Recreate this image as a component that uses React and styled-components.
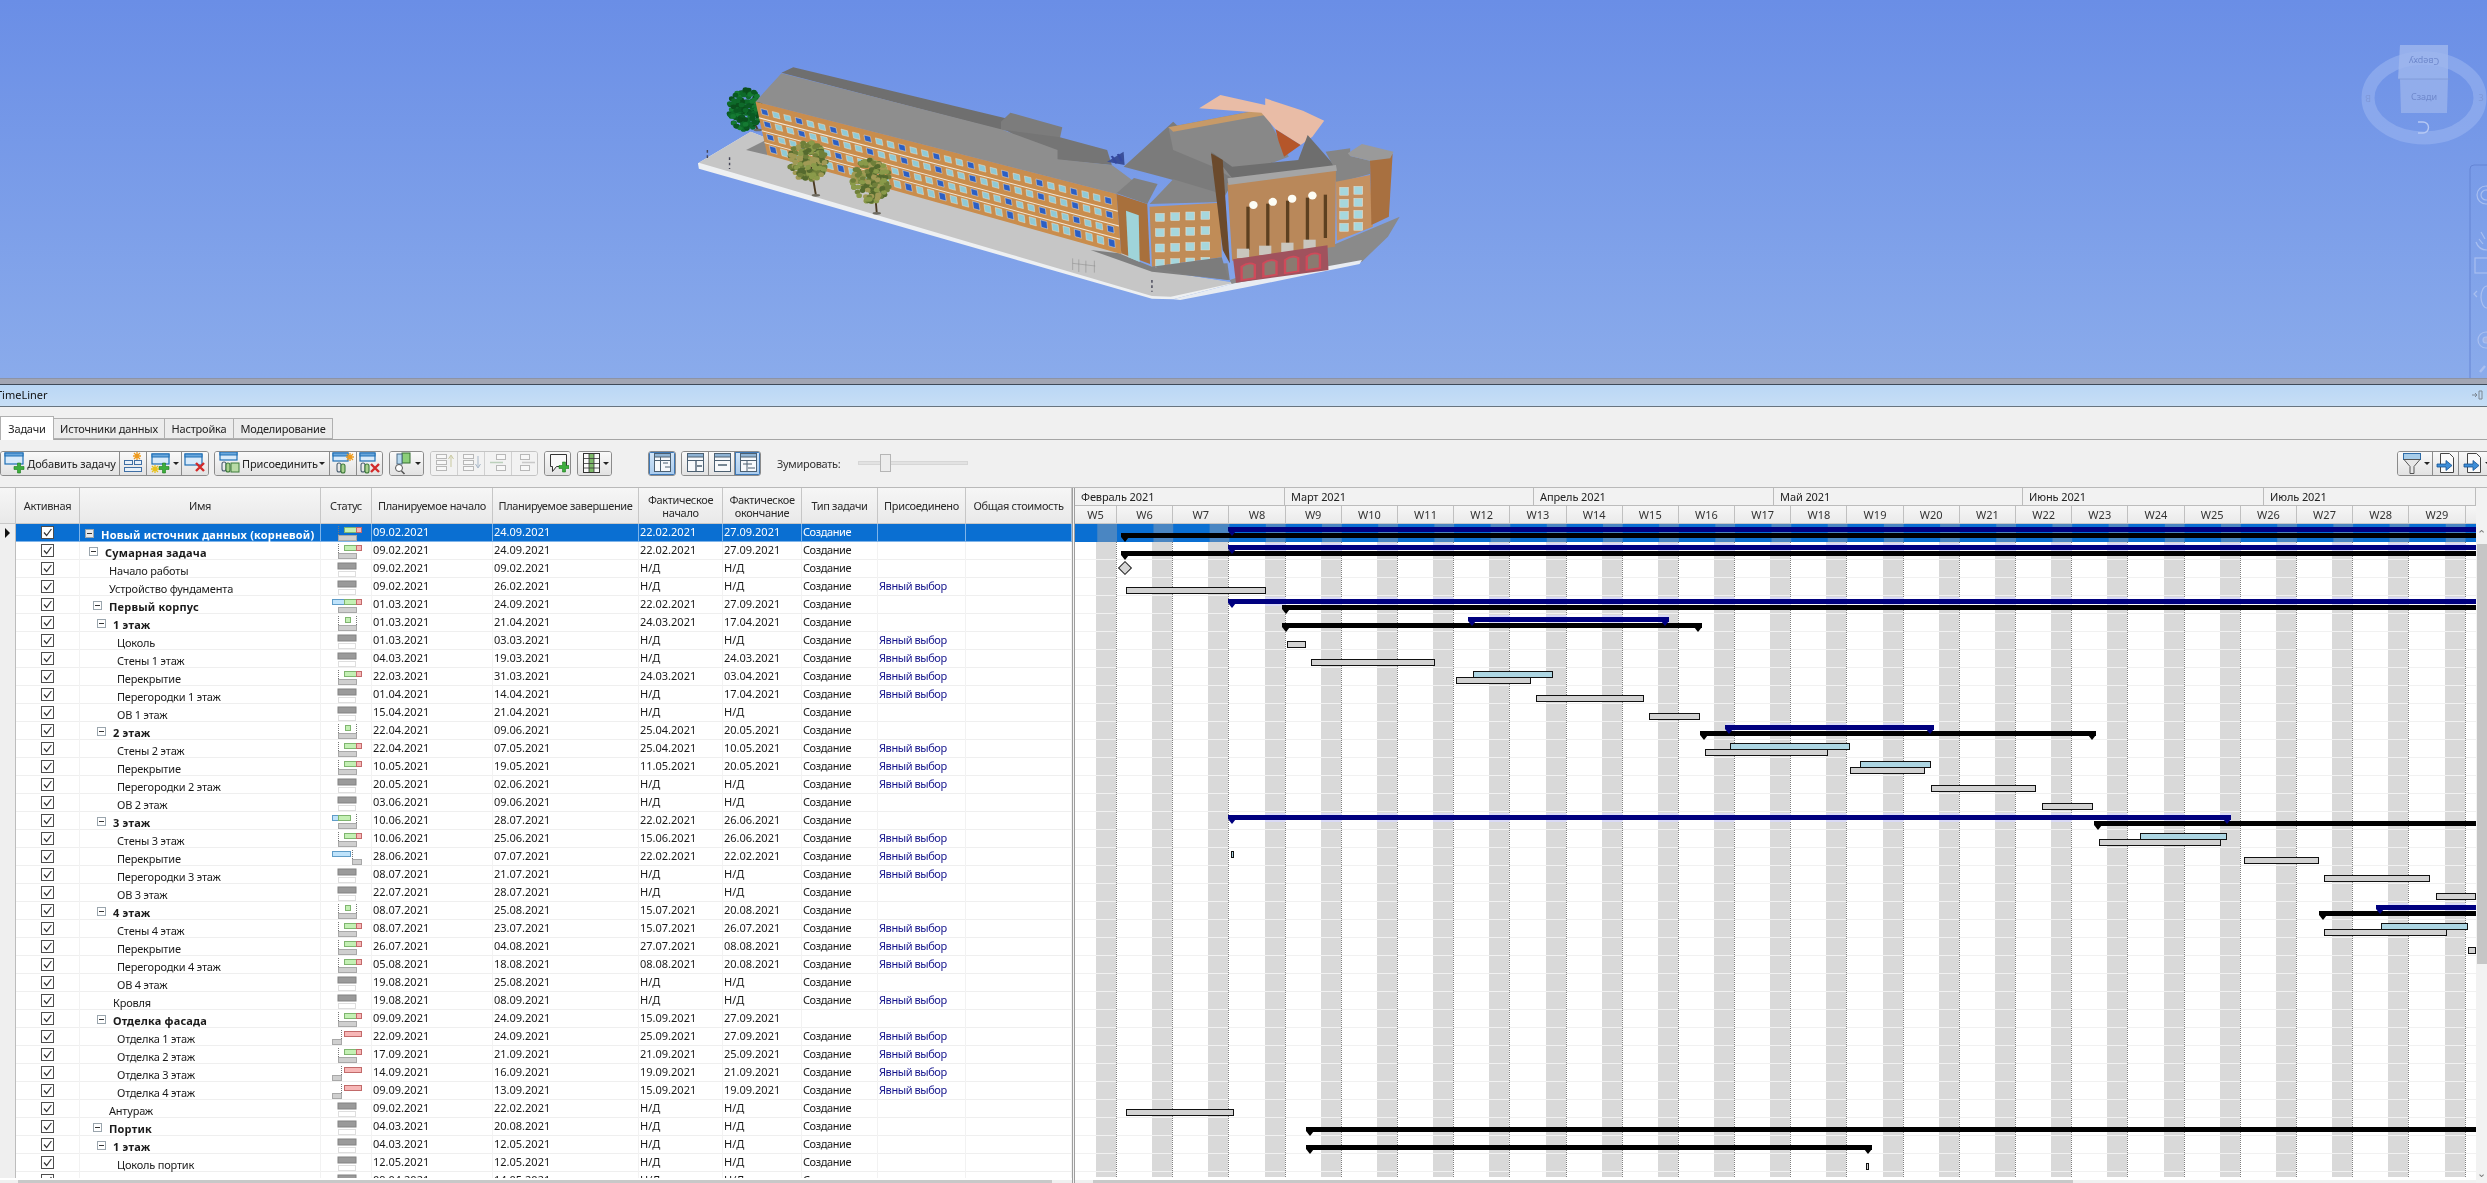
import React from 'react';
import styled, { createGlobalStyle, css } from 'styled-components';

const Global = createGlobalStyle`
  html, body { margin: 0; padding: 0; overflow: hidden; background: #f0f0f0; }
  * { box-sizing: border-box; }
  #root { font-family: "Noto Sans", "DejaVu Sans", sans-serif; font-size: 11px; color: #1a1a1a; }
`;

const Page = styled.div`
  width: 2487px; height: 1183px; overflow: hidden; display: flex; flex-direction: column;
`;

/* ---------- 3D viewport ---------- */
const Viewport = styled.div`
  position: relative; height: 378px; flex: none; overflow: hidden;
  background: linear-gradient(180deg, #6a8ee6 0%, #8aabeb 100%);
`;
const SceneSvg = styled.svg`position: absolute; left: 680px; top: 50px; width: 740px; height: 260px;`;
const CubeSvg = styled.svg`position: absolute; left: 2355px; top: 35px; width: 132px; height: 110px;`;
const NavSvg = styled.svg`position: absolute; left: 2468px; top: 164px; width: 19px; height: 214px;`;

const Splitter = styled.div`
  height: 7px; flex: none; background: #a2a6b3; border-top: 1px solid #8d93a5; border-bottom: 1px solid #3f4a58;
`;
const TitleBar = styled.div`
  height: 22px; flex: none; display: flex; align-items: center; justify-content: space-between; padding: 0 4px 2px 0;
  background: linear-gradient(180deg, #bad7f5, #c7def5); border-bottom: 1px solid #68747f; white-space: nowrap;
`;
const Title = styled.span`margin-left: -4px; font-size: 11px; color: #111;`;

const TabStrip = styled.div`
  height: 33px; flex: none; display: flex; align-items: flex-end; background: #f0f0f0; border-bottom: 1px solid #a5a5a5;
`;
const Tab = styled.div`
  height: ${p => p.$on ? 24 : 21}px; margin-bottom: ${p => p.$on ? -1 : 0}px; width: ${p => p.$w}px; display: flex; align-items: center; justify-content: center;
  border: 1px solid #b0b0b0; border-left-width: ${p => p.$on ? 1 : 0}px; border-bottom-width: ${p => p.$on ? 0 : 1}px;
  background: ${p => p.$on ? '#ffffff' : '#ececec'}; font-size: 11px; letter-spacing: -0.2px; color: #222; padding-bottom: 1px;
`;

/* ---------- toolbar ---------- */
const Toolbar = styled.div`
  height: 47px; flex: none; display: flex; align-items: center; background: #f0f0f0; padding-top: 0; overflow: hidden; padding-bottom: 1px;
`;
const BtnGroup = styled.div`
  display: flex; height: 25px; flex: none; margin-left: ${p => p.$ml || 0}px; border: 1px solid ${p => p.$off ? '#c4c4c4' : '#8b8b8b'}; border-radius: 3px; overflow: hidden;
  box-shadow: 0 1px 0 #fff inset;
`;
const Btn = styled.div`
  width: ${p => p.$w}px; height: 100%; display: flex; align-items: center; justify-content: center; gap: 1px; font-size: 11px; letter-spacing: -0.15px; color: #222;
  background: ${p => p.$active ? 'linear-gradient(180deg,#d3e6f8,#a9cbee)' : p.$off ? '#f2f2f2' : 'linear-gradient(180deg,#fafafa,#e2e2e2)'};
  border-right: 1px solid ${p => p.$off ? '#d0d0d0' : '#8b8b8b'};
  ${p => p.$active && css`box-shadow: inset 0 0 0 1px #3f78b5;`}
  &:last-child { border-right: 0; }
`;
const Caret = styled.i`
  width: 0; height: 0; border-left: 3px solid transparent; border-right: 3px solid transparent; border-top: 3px solid #222; flex: none;
`;
const ZoomLabel = styled.span`margin-left: 16px; font-size: 11px; letter-spacing: -0.3px; color: #333; white-space: nowrap; width: 65px;`;
const ZoomTrack = styled.div`
  position: relative; margin-left: 16px; width: 110px; height: 4px; background: #e2e2e2; border: 1px solid #d6d6d6;
`;
const ZoomThumb = styled.div`
  position: absolute; left: 21px; top: -8px; width: 11px; height: 18px; background: #ececec; border: 1px solid #b5b5b5;
`;
const Spring = styled.div`flex: 1;`;
const RightTools = styled.div`margin-right: -8px; display: flex; flex: none;`;

/* ---------- table ---------- */
const Panes = styled.div`
  flex: 1; min-height: 0; display: flex; border-top: 1px solid #b9b9b9; background: #fff; overflow: hidden;
`;
const Cols = '16px 64px 241px 51px 121px 146px 84px 79px 76px 88px 106px';
const TablePane = styled.div`width: 1072px; flex: none; display: flex; flex-direction: column; overflow: hidden;`;
const HeaderRow = styled.div`
  height: 36px; flex: none; display: grid; grid-template-columns: ${Cols};
  background: linear-gradient(180deg,#f6f6f6,#e9e9e9); border-bottom: 1px solid #c8c8c8;
`;
const HeaderCell = styled.div`
  display: flex; align-items: center; justify-content: center; text-align: center; line-height: 13px; font-size: 11px; letter-spacing: -0.35px; color: #2a2a2a;
  border-right: 1px solid #c6c6c6; white-space: pre-line;
`;
const Body = styled.div`height: 654px; flex: none; overflow: hidden; background: #fff;`;
const RowLine = styled.div`
  height: 18px; display: grid; grid-template-columns: ${Cols}; border-bottom: 1px solid #efefef;
  ${p => p.$sel && css`background: #0a6fd2; color: #fff; border-bottom-color: #7fb4e9;`}
`;
const Gutter = styled.div`
  background: #efefef; border-right: 1px solid #bdbdbd; border-bottom: 1px solid #c9c9c9; margin-bottom: -1px; display: flex; align-items: center; justify-content: center;
`;
const RowArrow = styled.i`
  width: 0; height: 0; border-top: 5px solid transparent; border-bottom: 5px solid transparent; border-left: 5px solid #111;
`;
const CheckCell = styled.div`
  display: flex; align-items: center; justify-content: center; border-right: 1px solid ${p => p.$sel ? '#7fb4e9' : '#f2f2f2'};
`;
const CheckBox = styled.div`
  width: 13px; height: 13px; background: #fff; border: 1px solid #4d4d4d; display: flex; align-items: center; justify-content: center; margin-top: -1px;
`;
const NameCell = styled.div`
  display: flex; align-items: center; padding-left: ${p => p.$pad}px; padding-top: 2px; white-space: nowrap; overflow: hidden;
  font-weight: ${p => p.$bold ? 700 : 400}; letter-spacing: ${p => p.$bold ? '0.2px' : '-0.2px'}; border-right: 1px solid ${p => p.$sel ? '#7fb4e9' : '#f2f2f2'}; font-size: 11px;
`;
const Expander = styled.span`
  width: 9px; height: 9px; flex: none; margin-right: 7px; position: relative; top: -1px;
  background: ${p => p.$sel ? '#e8e8e8' : '#fff'}; border: 1px solid #9aa5ad;
  &::after { content: ''; position: absolute; left: 1px; right: 1px; top: 3px; height: 1px; background: #333; }
`;
const StatusCell = styled.div`
  padding-left: 11px; display: flex; align-items: center; border-right: 1px solid ${p => p.$sel ? '#7fb4e9' : '#f2f2f2'};
`;
const TextCell = styled.div`
  padding: 0 0 3px 1px; display: flex; align-items: center; white-space: nowrap; overflow: hidden; font-size: 11px;
  letter-spacing: ${p => p.$tight ? '-0.42px' : '0'};
  color: ${p => p.$link ? '#14148c' : 'inherit'}; border-right: 1px solid ${p => p.$sel ? '#7fb4e9' : '#f2f2f2'};
`;
const HScrollRow = styled.div`
  margin-top: 2px; height: 4px; flex: none; background: #f0f0f0; display: flex; padding-left: ${p => p.$l}px; padding-right: ${p => p.$r}px;
`;
const HThumb = styled.div`flex: 1; background: #c8c8c8;`;

/* ---------- gantt ---------- */
const PaneGap = styled.div`
  width: 3px; flex: none; background: #f4f4f4; border-left: 1px solid #9e9e9e; border-right: 1px solid #9e9e9e;
`;
const GanttPane = styled.div`width: 1401px; flex: none; display: flex; flex-direction: column; overflow: hidden;`;
const MonthRow = styled.div`
  height: 18px; flex: none; display: flex; background: #f2f2f2; border-bottom: 1px solid #bcbcbc;
`;
const Month = styled.div`
  width: ${p => p.$w}px; flex: none; padding-left: 6px; display: flex; align-items: center; border-right: 1px solid #bcbcbc; font-size: 11px; letter-spacing: -0.1px; color: #222; white-space: nowrap;
`;
const weekCols = `42px repeat(24, 56.2px) 1fr`;
const WeekRow = styled.div`
  height: 18px; flex: none; display: grid; grid-template-columns: ${weekCols}; background: linear-gradient(180deg,#f6f6f6,#eaeaea); border-bottom: 1px solid #c8c8c8;
`;
const Week = styled.div`
  display: flex; align-items: center; justify-content: center; border-right: 1px solid #c0c0c0; font-size: 11px; color: #333;
`;
const GanttBody = styled.div`
  position: relative; height: 654px; flex: none; overflow: hidden; background: #fff;
`;
const StripeLayer = styled.div`
  position: absolute; inset: 0 0 1px 0; display: grid; grid-template-columns: ${weekCols};
`;
const StripeCol = styled.div`
  background: linear-gradient(#d9d9d9,#d9d9d9) right top / 20px 100% no-repeat;
  border-right: 1px dotted #7f7f7f;
`;
const StripeEnd = styled.div``;
const GanttRows = styled.div`position: relative;`;
const GanttRow = styled.div`
  position: relative; height: 18px; border-bottom: 1px solid #f1f1f1;
  ${p => p.$sel && css`
    border-bottom: 0;
    background: linear-gradient(90deg, #0a6fd2 0 36.2px, #4a86c2 36.2px) 42px 0 / 56.2px 100% repeat-x;
  `}
`;
const barKinds = {
  navy: css`top: 3px; height: 5px; background: #00007f;`,
  black: css`top: 9px; height: 5px; background: #000;`,
  plan: css`top: 9px; height: 7px; background: #d2d2d2; border: 1px solid #111;`,
  real: css`top: 3px; height: 7px; background: #add6e3; border: 1px solid #111;`,
};
const Bar = styled.div`
  position: absolute; z-index: ${p => p.$kind === 'plan' ? 2 : 1}; ${p => barKinds[p.$kind]};
`;
const Halo = styled.div`
  position: absolute; top: 1px; height: 9px; background: #cfcff6; mix-blend-mode: lighten;
`;
const Marker = styled.div`
  position: absolute; z-index: 3; width: 8px; height: 9px; clip-path: polygon(0 0, 100% 0, 100% 45%, 50% 100%, 0 45%);
  top: ${p => p.$kind === 'navy' ? 3 : 9}px; background: ${p => p.$kind === 'navy' ? '#00007f' : '#000'};
`;
const DiamondMark = styled.div`
  position: absolute; z-index: 3; width: 10px; height: 10px; top: 3px; background: #d6d6d6; border: 1px solid #222; transform: rotate(45deg);
`;

const VScroll = styled.div`
  width: 11px; flex: none; display: flex; flex-direction: column; background: #f2f2f2; margin-left: 0;
`;
const VArrow = styled.div`
  flex: none; height: ${p => p.$h}px; display: flex; align-items: ${p => p.$end ? 'flex-start' : 'flex-end'}; justify-content: center; padding-bottom: 3px; color: #777;
`;
const VThumb = styled.div`height: 420px; flex: none; margin-left: 1px; background: #c6c6c6;`;
const VFill = styled.div`flex: 1; min-height: 0;`;

/* ---------- drawings ---------- */
const LinkIcon = ({ x = 2, y = 10 }) => (
  <g fill="none" stroke="#4b5f70" strokeWidth="1.1">
    <rect x={x} y={y} width="4" height="9" rx="2" /><rect x={x + 4} y={y + 1} width="4" height="9" rx="2" fill="#a9d08e" stroke="#3d7a3a" />
  </g>
);
const TaskBox = ({ x = 1, y = 2, w = 16, h = 10 }) => (
  <g>
    <rect x={x} y={y} width={w} height={h} fill="#d8eafa" stroke="#1f6fb5" strokeWidth="1.2" />
    <rect x={x} y={y} width={w} height="3" fill="#6aa7dc" stroke="#1f6fb5" strokeWidth="1" />
  </g>
);
const Plus = ({ x = 14, y = 15 }) => (
  <path d={`M${x - 1.5} ${y - 5}h3v3.5h3.5v3h-3.5v3.5h-3v-3.5h-3.5v-3h3.5z`} fill="#3cae3c" stroke="#1c7a1c" strokeWidth=".6" />
);
const Cross = ({ x = 15, y = 15 }) => (
  <path d={`M${x - 4} ${y - 4}l8 8M${x + 4} ${y - 4}l-8 8`} stroke="#d22a2a" strokeWidth="2.4" />
);
const Star = ({ x = 17, y = 6, c = '#ee9a1d' }) => (
  <path d={`M${x} ${y - 4}v8M${x - 4} ${y}h8M${x - 3} ${y - 3}l6 6M${x + 3} ${y - 3}l-6 6`} stroke={c} strokeWidth="1.3" />
);
const GridIcon = ({ mode }) => (
  <g fill="none" stroke="#4c6072" strokeWidth="1">
    <rect x="3.5" y="2.5" width="16" height="18" fill="#f7f9fb" />
    <rect x="3.5" y="2.5" width="16" height="3.5" fill="#8fb3d4" />
    <path d="M3.5 9.5h16" />
    {mode === 'split' && <path d="M9.5 6v14.5M12 12h5M14 16h5" />}
    {mode === 'left' && <path d="M12 9.5v11M13 15h5" strokeWidth="1.4" />}
    {mode === 'mid' && <path d="M7 14h9" strokeWidth="1.4" />}
    {mode === 'right' && <path d="M10 9.5v11M6 13h9M11 17h7" />}
  </g>
);
const Icon = ({ kind }) => {
  const gray = '#b8b8b8';
  const map = {
    add: <><TaskBox x={1} y={2} w={18} h={11} /><Plus x={15} y={17} /></>,
    insert: <><g stroke="#3f6fa5" fill="#e8f1fa"><rect x="2.5" y="9.5" width="8" height="4" /><rect x="2.5" y="16.5" width="17" height="4" /><rect x="12.5" y="9.5" width="7" height="4" /></g><Star x={15} y={5} /></>,
    addStar: <><TaskBox x={2} y={3} w={17} h={10} /><Plus x={14} y={17} /><Star x={5} y={18} c="#e8c21d" /></>,
    del: <><TaskBox x={1} y={3} w={17} h={11} /><Cross x={16} y={16} /></>,
    attach: <><TaskBox x={1} y={1} w={17} h={8} /><LinkIcon x={3} y={11} /><rect x="12" y="12" width="8" height="9" fill="#b9dba6" stroke="#3d7a3a" /></>,
    attachStar: <><TaskBox x={1} y={2} w={15} h={8} /><LinkIcon x={5} y={12} /><Star x={18} y={6} /></>,
    attachX: <><TaskBox x={1} y={2} w={15} h={8} /><LinkIcon x={2} y={12} /><Cross x={16} y={17} /></>,
    find: <><rect x="10" y="2" width="8" height="10" fill="#8ccf7a" stroke="#356f30" /><rect x="5" y="3" width="5" height="10" fill="#b7d9f0" stroke="#4d6b85" /><circle cx="7" cy="17" r="3.5" fill="#fff" stroke="#555" /><path d="M9.5 20l3 3" stroke="#555" strokeWidth="1.6" /></>,
    up: <><g stroke={gray} fill="#f8f8f8"><rect x="3.5" y="3.5" width="10" height="4" /><rect x="3.5" y="9.5" width="10" height="4" /><rect x="3.5" y="15.5" width="10" height="4" /></g><path d="M18 16V5M15.5 8L18 4l2.5 4" stroke="#c9c9a0" fill="none" /></>,
    down: <><g stroke={gray} fill="#f8f8f8"><rect x="3.5" y="3.5" width="10" height="4" /><rect x="3.5" y="9.5" width="10" height="4" /><rect x="3.5" y="15.5" width="10" height="4" /></g><path d="M18 5v11M15.5 13l2.5 4 2.5-4" stroke="#a9b8c9" fill="none" /></>,
    indent: <><g stroke={gray} fill="#f8f8f8"><rect x="9.5" y="3.5" width="9" height="5" /><rect x="9.5" y="14.5" width="9" height="5" /></g><path d="M3 11.5h13" stroke="#bcd0bc" strokeWidth="1.5" /></>,
    outdent: <><g stroke={gray} fill="#f8f8f8"><rect x="6.5" y="3.5" width="9" height="5" /><rect x="6.5" y="14.5" width="9" height="5" /></g><path d="M8 11.5h13" stroke="#c8c8c8" strokeWidth="1.5" /></>,
    comment: <><path d="M3.5 3.5h16v12h-10l-4 5v-5h-2z" fill="#fafafa" stroke="#333" /><Plus x={17} y={16} /></>,
    columns: <><rect x="3.5" y="2.5" width="16" height="19" fill="#fafafa" stroke="#333" /><rect x="9" y="3" width="5" height="18" fill="#7cb868" /><path d="M3.5 7.5h16M3.5 12.5h16M3.5 17h16M9 3v18M14 3v18" stroke="#333" strokeWidth=".8" /></>,
    filter: <><rect x="2.5" y="2.5" width="17" height="6" fill="#a7cdea" stroke="#2e6ca8" /><path d="M3 8.5h16l-6 7v7h-4v-7z" fill="#e7e7e7" stroke="#555" /></>,
    doc: <><path d="M5.5 2.5h9l4 4v15h-13z" fill="#fafafa" stroke="#444" /><path d="M2 13h9V9.5l6 5-6 5V16H2z" fill="#3e8ed8" stroke="#14518f" strokeWidth=".8" /></>,
  };
  return <svg width="22" height="24" viewBox="0 0 22 24">{map[kind]}</svg>;
};

const CheckMark = () => (
  <svg width="11" height="11" viewBox="0 0 11 11"><path d="M2 5.5l2.6 3L9.4 2" fill="none" stroke="#333" strokeWidth="1.2" /></svg>
);

const Dash = ({ x }) => <path d={`M${x + 0.5} 2V17`} stroke="#777" strokeDasharray="1 1" />;
const PlanBar = ({ x = 6, w = 18, y = 11 }) => <rect x={x + .5} y={y + .5} width={w} height="5" fill="#cfcfcf" stroke="#a8a8a8" />;
const SG = '#c4f0b4', SR = '#f7b7b7', SB = '#bfe3fb';
const Seg = ({ x, w, c, s, y = 3 }) => <rect x={x + .5} y={y + .5} width={w} height="5" fill={c} stroke={s} />;
const StatusIcon = ({ k }) => (
  <svg width="30" height="18" viewBox="0 0 30 18">
    {k === 'N' && <><rect x="6" y="3" width="18" height="6" fill="#9a9a9a" stroke="#828282" /><rect x="6.5" y="11.5" width="17" height="5" fill="#fff" stroke="#dedede" /></>}
    {k === 'GR' && <><Dash x={6} /><Seg x={12} w={12} c={SG} s="#7fb56f" /><Seg x={24} w={5} c={SR} s="#c26a6a" /><PlanBar /></>}
    {k === 'G' && <><Dash x={6} /><Dash x={24} /><Seg x={13} w={5} c={SG} s="#7fb56f" /><PlanBar /></>}
    {k === 'BGR' && <><Seg x={0} w={12} c={SB} s="#5f9cc7" /><Seg x={12} w={12} c={SG} s="#7fb56f" /><Seg x={24} w={5} c={SR} s="#c26a6a" /><PlanBar /></>}
    {k === 'BG' && <><Dash x={24} /><Seg x={0} w={6} c={SB} s="#5f9cc7" /><Seg x={6} w={12} c={SG} s="#7fb56f" /><PlanBar /></>}
    {k === 'B' && <><Dash x={20} /><Seg x={0} w={18} c={SB} s="#5f9cc7" /><PlanBar x={20} w={9} /></>}
    {k === 'R' && <><Dash x={9} /><Seg x={12} w={17} c={SR} s="#c26a6a" /><PlanBar x={0} w={9} /></>}
  </svg>
);

/* building */
const poly = (pts, fill, extra = {}) => <polygon points={pts} fill={fill} {...extra} />;
const lerp = (a, b, t) => a + (b - a) * t;
const faceP = (u, v) => {
  const tx = lerp(160, 925, u), ty = lerp(160, 435, u), bx = lerp(185, 935, u), by = lerp(315, 610, u);
  return [lerp(tx, bx, v), lerp(ty, by, v)];
};
const FacadeWindows = () => {
  const out = [];
  const rows = [0.08, 0.32, 0.57, 0.8];
  for (let r = 0; r < 4; r++) {
    for (let c = 0; c < 31; c++) {
      const u = 0.012 + c * 0.0318, du = 0.018, dv = r === 3 ? 0.13 : 0.11, v = rows[r];
      const pts = [faceP(u, v), faceP(u + du, v), faceP(u + du, v + dv), faceP(u, v + dv)].map(p => p.join(',')).join(' ');
      const dark = (c * 7 + r * 3) % 3 === 0;
      out.push(<polygon key={r + '-' + c} points={pts} fill={dark ? '#2c5fc4' : '#8fcad6'} stroke="#e8e4d8" strokeWidth="1.2" />);
    }
  }
  return <g>{out}</g>;
};
const Band = ({ v }) => {
  const a = faceP(0, v), b = faceP(1, v);
  return <line x1={a[0]} y1={a[1]} x2={b[0]} y2={b[1]} stroke="#f2e8d8" strokeWidth="3" />;
};
const Tree = ({ cx, cy, rx, ry, tx, ty, colors, seed }) => {
  const dots = [];
  let s = seed;
  const rnd = () => { s = (s * 9301 + 49297) % 233280; return s / 233280; };
  for (let i = 0; i < 170; i++) {
    const a = rnd() * 6.283, q = Math.sqrt(rnd());
    dots.push(<ellipse key={i} cx={cx + Math.cos(a) * q * rx} cy={cy + Math.sin(a) * q * ry} rx="6" ry="7" fill={colors[i % colors.length]} />);
  }
  return <g><line x1={cx + 6} y1={cy} x2={tx} y2={ty} stroke="#4a3a22" strokeWidth="4" />{dots}<ellipse cx={tx} cy={ty} rx="9" ry="4" fill="#6d6a60" /></g>;
};
const WinGrid = ({ x0, y0, nx, ny, dx, dy, sx, sy }) => {
  const o = [];
  for (let j = 0; j < ny; j++) for (let i = 0; i < nx; i++) {
    o.push(<rect key={i + '_' + j} x={x0 + i * dx} y={y0 + j * dy + i * sy} width={sx} height="24" fill="#a6d7dd" stroke="#e4e0d4" strokeWidth="1.4" />);
  }
  return <g>{o}</g>;
};
const Scene = () => (
  <SceneSvg viewBox="0 0 1568 780" preserveAspectRatio="none">
    {poly('38,340 150,245 300,330 930,600 1000,660 1175,700 1045,748 1000,746 40,356', '#eef0f2')}
    {poly('40,338 150,245 300,330 930,600 1000,660 1175,698 1040,740 1000,738', '#c6c6c6')}
    {poly('1375,590 1525,500 1500,560 1445,635 1170,705 1165,690', '#8a8a8a')}
    {poly('1445,630 1175,700 1045,748 1060,750 1200,712 1440,642', '#e8ecf2')}
    {poly('870,600 930,610 1000,650 1160,640 1165,690 1000,665', '#7f7f7f')}
    {poly('140,300 182,270 185,315', '#888888')}
    <Tree cx={138} cy={178} rx={34} ry={62} tx={165} ty={240} colors={['#0e6a2a', '#0a5a22', '#157a32', '#0a4f1c']} seed={7} />
    {poly('215,68 240,52 690,205 680,240', '#6f6f6f')}
    {poly('680,215 700,188 810,232 805,265 680,240', '#7c7c7c')}
    {poly('690,240 805,262 905,300 915,345 800,330', '#757575')}
    {poly('160,155 215,70 680,238 800,300 800,328 915,345 960,392 925,432', '#8e8e8e')}
    {poly('160,155 925,432 935,612 185,315', '#c98d4d')}
    <Band v={0.28} /><Band v={0.53} /><Band v={0.76} />
    <FacadeWindows />
    {poly('905,335 940,305 942,345', '#3a4f9a')}
    {poly('940,350 1045,215 1175,385 1150,450 1045,390 1020,380', '#7b7b7b')}
    {poly('925,432 990,462 996,642 935,610', '#a8703c')}
    {poly('945,482 972,496 974,636 950,622', '#9fd4da')}
    {poly('925,430 962,384 1012,402 990,462', '#808080')}
    {poly('995,462 1045,388 1140,428 1145,456', '#858585')}
    {poly('995,470 1145,458 1148,622 1000,650', '#c08c57')}
    <WinGrid x0={1008} y0={490} nx={4} ny={4} dx={32} dy={46} sx={18} sy={-2} />
    {poly('1000,650 1148,622 1162,690 1060,670', '#7c7c7c')}
    {poly('1035,232 1235,178 1290,320 1170,385 1130,350 1045,300', '#888888')}
    {poly('1035,232 1235,178 1240,195 1045,245', '#c79a68')}
    {poly('1100,175 1145,135 1240,165 1240,145 1320,182 1365,212 1340,260 1315,285 1262,238 1232,188', '#e9bca6')}
    {poly('1262,238 1315,285 1280,320 1268,272', '#b5562a')}
    {poly('1125,305 1170,385 1390,352 1330,255 1310,330 1170,350', '#6e6e6e')}
    {poly('1125,310 1150,330 1165,640 1150,600', '#6b4a2c')}
    {poly('1368,305 1420,295 1420,318 1462,332 1462,372 1390,400 1385,350', '#858585')}
    {poly('1390,395 1462,375 1468,530 1392,572', '#c49060')}
    <WinGrid x0={1398} y0={412} nx={2} ny={4} dx={30} dy={36} sx={18} sy={-3} />
    {poly('1462,330 1510,312 1502,500 1465,525', '#a87040')}
    {poly('1415,310 1445,282 1512,305 1505,325 1462,332 1420,318', '#9a9a9a')}
    {poly('1160,400 1390,350 1388,590 1170,632', '#b9885a')}
    {poly('1160,385 1390,345 1392,362 1162,405', '#a5a5a5')}
    {[1200, 1242, 1284, 1326, 1364].map((x, i) => <rect key={x} x={x} y={470 - i * 9} width="7" height="130" fill="#5d4020" />)}
    {[1215, 1256, 1297, 1340].map((x, i) => <ellipse key={x} cx={x} cy={465 - i * 9.5} rx="9" ry="12" fill="#fdfdf5" />)}
    {[0, 1, 2, 3].map(i => <rect key={i} x={1180 + i * 47} y={596 - i * 9} width="26" height="28" fill="#c9c6be" />)}
    {poly('1172,628 1372,586 1374,660 1178,698', '#a0525d')}
    {[0, 1, 2, 3].map(i => <path key={i} d={`M${1190 + i * 46} ${690 - i * 10}v-40q14 -16 28 -6v40z`} fill="#8a7a70" stroke="#cf4a5a" strokeWidth="5" />)}
    <Tree cx={270} cy={335} rx={40} ry={58} tx={288} ty={436} colors={['#6f7f3a', '#8a9a4a', '#556a2e', '#a09a55']} seed={31} />
    <Tree cx={405} cy={392} rx={40} ry={64} tx={417} ty={490} colors={['#6f7f3a', '#8a9a4a', '#556a2e', '#a09a55']} seed={77} />
    <path d="M832 625v35M845 628v38M860 632v36M878 632v36M832 640l48 8" stroke="#777" fill="none" />
    <path d="M105 322v35M58 300v30M1000 690v35" stroke="#445" strokeWidth="3" strokeDasharray="8 8" />
    <path d="M915 318l10 22M928 312l8 22" stroke="#3448a0" strokeWidth="5" />
  </SceneSvg>
);
const CubeWidget = () => (
  <CubeSvg viewBox="0 0 132 110">
    <ellipse cx="69" cy="63" rx="56" ry="40" fill="none" stroke="#9ab4f0" strokeOpacity=".6" strokeWidth="13" />
    <polygon points="45,10 93,10 93,44 43,44" fill="#a0b8ee" fillOpacity=".8" />
    <polygon points="45,44 93,44 92,78 46,78" fill="#94aeeb" fillOpacity=".95" />
    <line x1="43" y1="44" x2="95" y2="44" stroke="#7d97d6" strokeWidth=".8" />
    <text x="69" y="65" textAnchor="middle" fontSize="9" fill="#6f89cc" fontFamily="Noto Sans">Сзади</text>
    <text x="0" y="0" textAnchor="middle" fontSize="9" fill="#6f89cc" fontFamily="Noto Sans" transform="translate(69 23) rotate(180)">Сверху</text>
    <text x="13" y="66" textAnchor="middle" fontSize="9" fill="#7f98d8" fontFamily="Noto Sans" transform="rotate(180 13 63)">В</text>
    <text x="126" y="66" textAnchor="middle" fontSize="9" fill="#7f98d8" fontFamily="Noto Sans">З</text>
    <path d="M63 98h5a5 5 0 0 0 0-11h-5" fill="none" stroke="#b7c9f4" strokeWidth="1.4" />
  </CubeSvg>
);
const NavBar = () => (
  <NavSvg viewBox="0 0 19 214" fill="none">
    <path d="M19 1H6a4 4 0 0 0-4 4v209" stroke="#6484d4" strokeWidth="1" />
    <g stroke="#a9bff0" strokeWidth="1.2">
      <circle cx="18" cy="31" r="9" /><circle cx="18" cy="31" r="5" />
      <path d="M8 78c2 6 6 8 11 8M11 75l4 5M13 68l4 7" />
      <rect x="7" y="94" width="14" height="15" />
      <ellipse cx="19" cy="133" rx="6" ry="11" /><path d="M9 127l-3 3 3 3" />
      <circle cx="18" cy="176" r="8" /><circle cx="18" cy="176" r="3" fill="#9fb2e4" />
      <path d="M12 208l5-6" strokeWidth="2.5" />
    </g>
  </NavSvg>
);

/* ---------- data ---------- */
const Я = 'Явный выбор', НД = 'Н/Д';
const y = (d) => d.length === 5 ? d + '.2021' : d;
const T = (name, lvl, kind, status, a, b, c, d, link, extra = {}) => ({ name, lvl, parent: kind === 'p', status, cells: [y(a), y(b), c === 0 ? НД : y(c), d === 0 ? НД : y(d)], link, ...extra });
const END = 2476;
const g = (from, to) => ({ k: 'plan', from, to });
const r = (from, to) => ({ k: 'real', from, to });
const n = (from, to) => ({ k: 'navy', from, to });
const b = (from, to) => ({ k: 'black', from, to });

const rows = [
  { ...T('Новый источник данных (корневой)', 0, 'p', 'GR', '09.02', '24.09', '22.02', '27.09', ''), bars: [n(1229, END), b(1122, END)] },
  { ...T('Сумарная задача', 1, 'p', 'GR', '09.02', '24.09', '22.02', '27.09', ''), bars: [n(1229, END), b(1122, END)] },
  { ...T('Начало работы', 2, 'l', 'N', '09.02', '09.02', 0, 0, ''), diamond: 1125 },
  { ...T('Устройство фундамента', 2, 'l', 'N', '09.02', '26.02', 0, 0, Я), bars: [g(1126, 1266)] },
  { ...T('Первый корпус', 2, 'p', 'BGR', '01.03', '24.09', '22.02', '27.09', ''), bars: [n(1229, END), b(1283, END)] },
  { ...T('1 этаж', 3, 'p', 'G', '01.03', '21.04', '24.03', '17.04', ''), bars: [n(1469, 1669), b(1283, 1702)] },
  { ...T('Цоколь', 4, 'l', 'N', '01.03', '03.03', 0, 0, Я), bars: [g(1287, 1306)] },
  { ...T('Стены 1 этаж', 4, 'l', 'N', '04.03', '19.03', 0, '24.03', Я), bars: [g(1311, 1435)] },
  { ...T('Перекрытие', 4, 'l', 'GR', '22.03', '31.03', '24.03', '03.04', Я), bars: [r(1473, 1553), g(1456, 1531)] },
  { ...T('Перегородки 1 этаж', 4, 'l', 'N', '01.04', '14.04', 0, '17.04', Я), bars: [g(1536, 1644)] },
  { ...T('ОВ 1 этаж', 4, 'l', 'N', '15.04', '21.04', 0, 0, ''), bars: [g(1649, 1700)] },
  { ...T('2 этаж', 3, 'p', 'G', '22.04', '09.06', '25.04', '20.05', ''), bars: [n(1726, 1934), b(1701, 2096)] },
  { ...T('Стены 2 этаж', 4, 'l', 'GR', '22.04', '07.05', '25.04', '10.05', Я), bars: [r(1730, 1850), g(1705, 1828)] },
  { ...T('Перекрытие', 4, 'l', 'GR', '10.05', '19.05', '11.05', '20.05', Я), bars: [r(1860, 1931), g(1850, 1925)] },
  { ...T('Перегородки 2 этаж', 4, 'l', 'N', '20.05', '02.06', 0, 0, Я), bars: [g(1931, 2036)] },
  { ...T('ОВ 2 этаж', 4, 'l', 'N', '03.06', '09.06', 0, 0, ''), bars: [g(2042, 2093)] },
  { ...T('3 этаж', 3, 'p', 'BG', '10.06', '28.07', '22.02', '26.06', ''), bars: [n(1229, 2231), b(2095, END)] },
  { ...T('Стены 3 этаж', 4, 'l', 'GR', '10.06', '25.06', '15.06', '26.06', Я), bars: [r(2140, 2227), g(2099, 2221)] },
  { ...T('Перекрытие', 4, 'l', 'B', '28.06', '07.07', '22.02', '22.02', Я), bars: [r(1231, 1234), g(2244, 2319)] },
  { ...T('Перегородки 3 этаж', 4, 'l', 'N', '08.07', '21.07', 0, 0, Я), bars: [g(2324, 2430)] },
  { ...T('ОВ 3 этаж', 4, 'l', 'N', '22.07', '28.07', 0, 0, ''), bars: [g(2436, END)] },
  { ...T('4 этаж', 3, 'p', 'G', '08.07', '25.08', '15.07', '20.08', ''), bars: [n(2377, END), b(2320, END)] },
  { ...T('Стены 4 этаж', 4, 'l', 'GR', '08.07', '23.07', '15.07', '26.07', Я), bars: [r(2381, 2468), g(2324, 2447)] },
  { ...T('Перекрытие', 4, 'l', 'GR', '26.07', '04.08', '27.07', '08.08', Я), bars: [g(2468, END)] },
  { ...T('Перегородки 4 этаж', 4, 'l', 'GR', '05.08', '18.08', '08.08', '20.08', Я), bars: [] },
  { ...T('ОВ 4 этаж', 4, 'l', 'N', '19.08', '25.08', 0, 0, ''), bars: [] },
  { ...T('Кровля', 3, 'l', 'N', '19.08', '08.09', 0, 0, Я), bars: [] },
  { ...T('Отделка фасада', 3, 'p', 'GR', '09.09', '24.09', '15.09', '27.09', ''), noType: true, bars: [] },
  { ...T('Отделка 1 этаж', 4, 'l', 'R', '22.09', '24.09', '25.09', '27.09', Я), bars: [] },
  { ...T('Отделка 2 этаж', 4, 'l', 'GR', '17.09', '21.09', '21.09', '25.09', Я), bars: [] },
  { ...T('Отделка 3 этаж', 4, 'l', 'R', '14.09', '16.09', '19.09', '21.09', Я), bars: [] },
  { ...T('Отделка 4 этаж', 4, 'l', 'R', '09.09', '13.09', '15.09', '19.09', Я), bars: [] },
  { ...T('Антураж', 2, 'l', 'N', '09.02', '22.02', 0, 0, ''), bars: [g(1126, 1234)] },
  { ...T('Портик', 2, 'p', 'N', '04.03', '20.08', 0, 0, ''), bars: [b(1307, END)] },
  { ...T('1 этаж', 3, 'p', 'N', '04.03', '12.05', 0, 0, ''), bars: [b(1307, 1872)] },
  { ...T('Цоколь портик', 4, 'l', 'N', '12.05', '12.05', 0, 0, ''), bars: [g(1866, 1869)] },
  { ...T('', 4, 'l', 'N', '09.04', '14.05', 0, 0, ''), bars: [] },
];

const weeks = Array.from({ length: 25 }, (_, i) => 'W' + (i + 5));
const months = [['Февраль 2021', 210], ['Март 2021', 249], ['Апрель 2021', 240], ['Май 2021', 249], ['Июнь 2021', 241], ['Июль 2021', 212]];
const headers = ['', 'Активная', 'Имя', 'Статус', 'Планируемое начало', 'Планируемое завершение', 'Фактическое\nначало', 'Фактическое\nокончание', 'Тип задачи', 'Присоединено', 'Общая стоимость'];
const ORIGIN = 1075;

const TableRow = ({ row, sel }) => (
  <RowLine $sel={sel}>
    <Gutter>{sel && <RowArrow />}</Gutter>
    <CheckCell $sel={sel}><CheckBox><CheckMark /></CheckBox></CheckCell>
    <NameCell $sel={sel} $bold={row.parent} $pad={row.parent ? 5 + row.lvl * 4 : 21 + row.lvl * 4}>
      {row.parent && <Expander $sel={sel} />}{row.name}
    </NameCell>
    <StatusCell $sel={sel}><StatusIcon k={row.status} /></StatusCell>
    {row.cells.map((c, i) => <TextCell key={i} $sel={sel}>{c}</TextCell>)}
    <TextCell $sel={sel} $tight>{row.noType ? '' : 'Создание'}</TextCell>
    <TextCell $sel={sel} $link $tight>{row.link}</TextCell>
    <TextCell $sel={sel} />
  </RowLine>
);

const GanttLine = ({ row, sel }) => (
  <GanttRow $sel={sel}>
    {row.diamond && <DiamondMark style={{ left: row.diamond - ORIGIN - 5 }} />}
    {(row.bars || []).map((bar, i) => {
      const left = bar.from - ORIGIN, width = bar.to - bar.from;
      const marks = bar.k === 'navy' || bar.k === 'black';
      return (
        <React.Fragment key={i}>
          {bar.k === 'navy' && !sel && <Halo style={{ left, width }} />}
          <Bar $kind={bar.k} style={{ left, width }} />
          {marks && <Marker $kind={bar.k} style={{ left: left - 1 }} />}
          {marks && bar.to < END && <Marker $kind={bar.k} style={{ left: bar.to - ORIGIN - 8 }} />}
        </React.Fragment>
      );
    })}
  </GanttRow>
);

function GridIconWrap({ mode }) {
  return <svg width="22" height="24" viewBox="0 0 22 24"><GridIcon mode={mode} /></svg>;
}

export default function App() {
  return (
    <Page>
      <Global />
      <Viewport>
        <Scene />
        <CubeWidget />
        <NavBar />
      </Viewport>
      <Splitter />
      <TitleBar>
        <Title>TimeLiner</Title>
        <svg width="12" height="12" viewBox="0 0 12 12" fill="none" stroke="#7d8793"><path d="M1 6h5M4 4l2 2-2 2M8 2v8M8 2h3v8H8" /></svg>
      </TitleBar>
      <TabStrip>
        <Tab $on $w={54}>Задачи</Tab>
        <Tab $w={111}>Источники данных</Tab>
        <Tab $w={69}>Настройка</Tab>
        <Tab $w={99}>Моделирование</Tab>
      </TabStrip>
      <Toolbar>
        <BtnGroup>
          <Btn $w={119}><Icon kind="add" />Добавить задачу</Btn>
          <Btn $w={27}><Icon kind="insert" /></Btn>
          <Btn $w={35}><Icon kind="addStar" /><Caret /></Btn>
          <Btn $w={26}><Icon kind="del" /></Btn>
        </BtnGroup>
        <BtnGroup $ml={5}>
          <Btn $w={115}><Icon kind="attach" />Присоединить<Caret /></Btn>
          <Btn $w={27}><Icon kind="attachStar" /></Btn>
          <Btn $w={25}><Icon kind="attachX" /></Btn>
        </BtnGroup>
        <BtnGroup $ml={6}><Btn $w={33}><Icon kind="find" /><Caret /></Btn></BtnGroup>
        <BtnGroup $ml={6} $off>
          <Btn $w={27} $off><Icon kind="up" /></Btn>
          <Btn $w={27} $off><Icon kind="down" /></Btn>
          <Btn $w={27} $off><Icon kind="indent" /></Btn>
          <Btn $w={25} $off><Icon kind="outdent" /></Btn>
        </BtnGroup>
        <BtnGroup $ml={6}><Btn $w={25}><Icon kind="comment" /></Btn></BtnGroup>
        <BtnGroup $ml={6}><Btn $w={33}><Icon kind="columns" /><Caret /></Btn></BtnGroup>
        <BtnGroup $ml={36}><Btn $w={26} $active><GridIconWrap mode="split" /></Btn></BtnGroup>
        <BtnGroup $ml={5}>
          <Btn $w={27}><GridIconWrap mode="left" /></Btn>
          <Btn $w={26}><GridIconWrap mode="mid" /></Btn>
          <Btn $w={25} $active><GridIconWrap mode="right" /></Btn>
        </BtnGroup>
        <ZoomLabel>Зумировать:</ZoomLabel>
        <ZoomTrack><ZoomThumb /></ZoomTrack>
        <Spring />
        <RightTools>
          <BtnGroup>
            <Btn $w={35}><Icon kind="filter" /><Caret /></Btn>
            <Btn $w={26}><Icon kind="doc" /></Btn>
            <Btn $w={35}><Icon kind="doc" /><Caret /></Btn>
          </BtnGroup>
        </RightTools>
      </Toolbar>
      <Panes>
        <TablePane>
          <HeaderRow>
            {headers.map((h, i) => <HeaderCell key={i}>{h}</HeaderCell>)}
          </HeaderRow>
          <Body>
            {rows.map((row, i) => <TableRow key={i} row={row} sel={i === 0} />)}
          </Body>
          <HScrollRow $l={18} $r={20}><HThumb /></HScrollRow>
        </TablePane>
        <PaneGap />
        <GanttPane>
          <MonthRow>
            {months.map(([m, w]) => <Month key={m} $w={w}>{m}</Month>)}
          </MonthRow>
          <WeekRow>
            {weeks.map(w => <Week key={w}>{w}</Week>)}
            <span />
          </WeekRow>
          <GanttBody>
            <StripeLayer>
              {weeks.map(w => <StripeCol key={w} />)}
              <StripeEnd />
            </StripeLayer>
            <GanttRows>
              {rows.map((row, i) => <GanttLine key={i} row={row} sel={i === 0} />)}
            </GanttRows>
          </GanttBody>
          <HScrollRow $l={18} $r={403}><HThumb /></HScrollRow>
        </GanttPane>
        <VScroll>
          <VArrow $h={56}>⌃</VArrow>
          <VThumb />
          <VFill />
          <VArrow $h={18} $end>⌄</VArrow>
        </VScroll>
      </Panes>
    </Page>
  );
}
